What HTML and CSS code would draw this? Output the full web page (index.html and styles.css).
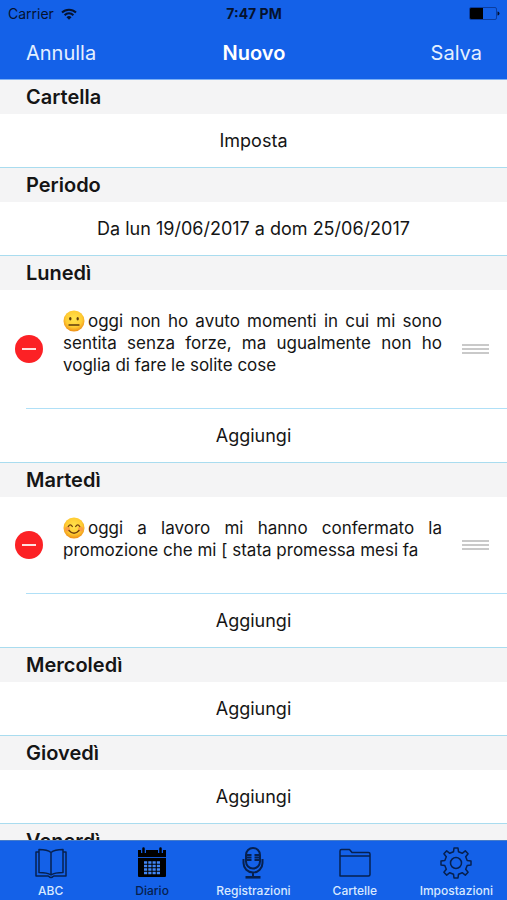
FILE: index.html
```html
<!DOCTYPE html>
<html lang="it">
<head>
<meta charset="utf-8">
<meta name="viewport" content="width=device-width, initial-scale=1">
<title>Nuovo</title>
<link rel="stylesheet" href="styles.css">
</head>
<body>
<header class="top">
  <div class="status">
    <div class="carrier">Carrier
      <svg width="16" height="12" viewBox="0 0 16 12" fill="none" stroke="#05122f" stroke-width="2"><path d="M1 4.500a10 10 0 0 1 14 0M3.600 7.200a6.200 6.200 0 0 1 8.800 0"/><path d="M8 11.800 5.500 9.300a3.500 3.500 0 0 1 5 0z" fill="#05122f" stroke="none"/></svg>
    </div>
    <div class="clock">7:47 PM</div>
    <div class="battery">
      <svg width="31" height="13" viewBox="0 0 31 13"><rect x=".5" y=".5" width="27" height="12" rx="1.500" fill="none" stroke="#0b3da0"/><path d="M2 1h12v11H2a1 1 0 0 1-1-1V2a1 1 0 0 1 1-1z" fill="#000"/><path d="M28.500 4.500a2 2 0 0 1 0 4z" fill="#05122f"/></svg>
    </div>
  </div>
  <nav class="bar">
    <button class="action" type="button">Annulla</button>
    <h1>Nuovo</h1>
    <button class="action save" type="button">Salva</button>
  </nav>
</header>

<main class="list">
  <section><h2>Cartella</h2><button class="row" type="button">Imposta</button></section>
  <section><h2>Periodo</h2><button class="row" type="button">Da lun 19/06/2017 a dom 25/06/2017</button></section>
  <section>
    <h2>Lunedì</h2>
    <article class="entry">
      <button class="remove" type="button" aria-label="Elimina"></button>
      <p><svg class="face" viewBox="0 0 22 22" role="img" aria-label="faccina neutra"><defs><radialGradient id="skin" cx=".5" cy=".4" r=".6"><stop offset="0" stop-color="#ffe34d"/><stop offset=".65" stop-color="#ffcc33"/><stop offset="1" stop-color="#ee8e16"/></radialGradient></defs><circle cx="11" cy="11" r="10.500" fill="url(#skin)"/><ellipse cx="7.300" cy="8.800" rx="1.200" ry="1.800" fill="#5f3b0b"/><ellipse cx="14.700" cy="8.800" rx="1.200" ry="1.800" fill="#5f3b0b"/><path d="M6 15h10" stroke="#5f3b0b" stroke-width="1.400" stroke-linecap="round"/></svg>oggi non ho avuto momenti in cui mi sono sentita senza forze, ma ugualmente non ho voglia di fare le solite cose</p>
      <span class="grip"></span>
    </article>
    <button class="row" type="button">Aggiungi</button>
  </section>
  <section>
    <h2>Martedì</h2>
    <article class="entry">
      <button class="remove" type="button" aria-label="Elimina"></button>
      <p><svg class="face" viewBox="0 0 22 22" role="img" aria-label="faccina sorridente"><circle cx="11" cy="11" r="10.500" fill="url(#skin)"/><circle cx="4.500" cy="12" r="2.500" fill="#f98b48" opacity=".7"/><circle cx="17.500" cy="12" r="2.500" fill="#f98b48" opacity=".7"/><path d="M5.300 9.500q2-3.200 4 0M12.700 9.500q2-3.200 4 0M6 13.500q5 5.500 10 0" fill="none" stroke="#71400d" stroke-width="1.400" stroke-linecap="round"/></svg>oggi a lavoro mi hanno confermato la promozione che mi [ stata promessa mesi fa</p>
      <span class="grip"></span>
    </article>
    <button class="row" type="button">Aggiungi</button>
  </section>
  <section><h2>Mercoledì</h2><button class="row" type="button">Aggiungi</button></section>
  <section><h2>Giovedì</h2><button class="row" type="button">Aggiungi</button></section>
  <section><h2>Venerdì</h2></section>
</main>

<nav class="tabs">
  <a href="#abc">
    <svg viewBox="0 0 32 32"><path d="M16 5.500C13 3 9 2.500 4 2.500v23c5 0 9 .5 12 2.500 3-2 7-2.500 12-2.500v-23c-5 0-9 .5-12 3zM16 5.500V28M4 5H1v24h12c1 0 1 1.500 3 1.500S18 29 19 29h12V5h-3"/></svg>
    <span>ABC</span></a>
  <a href="#diario" class="active" aria-current="page">
    <svg viewBox="0 0 32 32"><path d="M2 3h28v7H2zM2 11h28v18a1 1 0 0 1-1 1H3a1 1 0 0 1-1-1z" fill="#000" stroke="none"/><path d="M7.500 2v4M24.500 2v4" stroke="#1461e8" stroke-width="5"/><path d="M7.500 1.500v4M24.500 1.500v4" stroke="#000" stroke-width="2.500" stroke-linecap="round"/><path d="M2 10.500h28" stroke="#1453bf" stroke-width=".6"/><path d="M8 15.500h16M8 19h16M8 22.500h16M8 26h16" stroke="#4186f5" stroke-width="2.400" stroke-dasharray="3.200 1.067"/></svg>
    <span>Diario</span></a>
  <a href="#registrazioni">
    <svg viewBox="0 0 32 32"><rect x="9" y="1" width="14" height="20.500" rx="7" stroke-width="2"/><path d="M6.500 12v4a9.500 9.500 0 0 0 19 0v-4M16 25.500v4" stroke-width="2"/><path d="M8.500 30.300h15" stroke-width="2.600"/><path d="M10 8h4.500M10 10.500h4.500M10 13h4.500M17.500 8H22M17.500 10.500H22M17.500 13H22" stroke-width="1.800"/></svg>
    <span>Registrazioni</span></a>
  <a href="#cartelle">
    <svg viewBox="0 0 32 32"><path d="M1 29V4q0-1.500 1.500-1.500h8L13 5.500h16.500Q31 5.500 31 7v20.500q0 1.500-1.500 1.500zM1 9h30"/></svg>
    <span>Cartelle</span></a>
  <a href="#impostazioni">
    <svg viewBox="0 0 32 32"><circle cx="16" cy="16" r="5.500"/><path d="M13.500 4.800 14 1h4l.5 3.800 3.700 1.500 3.100-2.400 2.800 2.800-2.400 3.100 1.500 3.700L31 14v4l-3.800.5-1.500 3.700 2.400 3.100-2.800 2.800-3.100-2.400-3.700 1.500L18 31h-4l-.5-3.800-3.700-1.500-3.100 2.400-2.800-2.800 2.400-3.100-1.500-3.700L1 18v-4l3.800-.5 1.500-3.700-2.400-3.100 2.800-2.800 3.100 2.400z"/></svg>
    <span>Impostazioni</span></a>
</nav>
</body>
</html>
```
FILE: styles.css
```css
* { box-sizing: border-box; }

body {
  margin: 0;
  height: 100vh;
  display: flex;
  flex-direction: column;
  background: #fff;
  color: #151515;
  font-family: Inter, "Liberation Sans", sans-serif;
  font-size: 18px;
  line-height: 22px;
}

button {
  border: 0;
  padding: 0;
  background: none;
  color: inherit;
  font: inherit;
}

.top {
  flex: none;
  background: #1461e8;
  border-bottom: 1px solid #7db0f5;
}

.status,
.bar {
  display: grid;
  grid-template-columns: 1fr auto 1fr;
  align-items: center;
}

.status {
  height: 27px;
  padding: 0 7px 0 8px;
  color: #05122f;
  font-size: 14px;
}

.carrier {
  display: flex;
  align-items: center;
  gap: 7px;
}

.clock { font-weight: 700; }

.battery {
  display: flex;
  justify-content: flex-end;
}

.bar {
  height: 52px;
  padding: 0 25px 0 26px;
  color: #fff;
}

.action {
  color: #e4f0ff;
  font-size: 20px;
  text-align: left;
}

.save { text-align: right; }

h1 {
  margin: 0;
  font-size: 20px;
  font-weight: 600;
}

.list {
  flex: 1;
  min-height: 0;
  overflow: hidden;
}

h2 {
  margin: 0;
  height: 34px;
  padding: 0 26px;
  background: #f4f4f5;
  font-size: 20px;
  font-weight: 600;
  line-height: 34px;
}

.row {
  display: block;
  width: 100%;
  height: 54px;
  border-bottom: 1px solid #a9dcef;
}

.entry {
  display: flex;
  align-items: center;
  gap: 20px;
  margin-left: 26px;
  padding-right: 18px;
  border-bottom: 1px solid #b0e0f7;
}

.entry p {
  flex: 1;
  margin: 0;
  padding: 20px 0 32px;
  font-size: 17px;
  text-align: justify;
}

.remove {
  display: grid;
  place-items: center;
  width: 28px;
  height: 28px;
  margin-left: -11px;
  border-radius: 50%;
  background: #fc2125;
}

.remove::before {
  content: "";
  width: 14px;
  height: 2px;
  background: #ffe0e0;
}

.face {
  width: 22px;
  height: 22px;
  margin-right: 3px;
  vertical-align: top;
}

.grip {
  width: 27px;
  height: 10px;
  border-top: 2px solid #c9c9c9;
  border-bottom: 2px solid #c9c9c9;
  background: linear-gradient(#c9c9c9, #c9c9c9) center / 100% 2px no-repeat;
}

.tabs {
  flex: none;
  display: grid;
  grid-template-columns: repeat(5, 1fr);
  height: 60px;
  background: #1461e8;
  border-top: 1px solid #467cca;
}

.tabs a {
  display: flex;
  flex-direction: column;
  align-items: center;
  gap: 4px;
  padding-top: 6px;
  color: #d8e9ff;
  font-size: 12px;
  font-weight: 500;
  line-height: 16px;
  text-decoration: none;
}

.tabs .active { color: #06204f; }

.tabs svg {
  width: 32px;
  height: 32px;
  fill: none;
  stroke: #06204f;
  stroke-width: 1.5;
  stroke-linejoin: round;
}
```
